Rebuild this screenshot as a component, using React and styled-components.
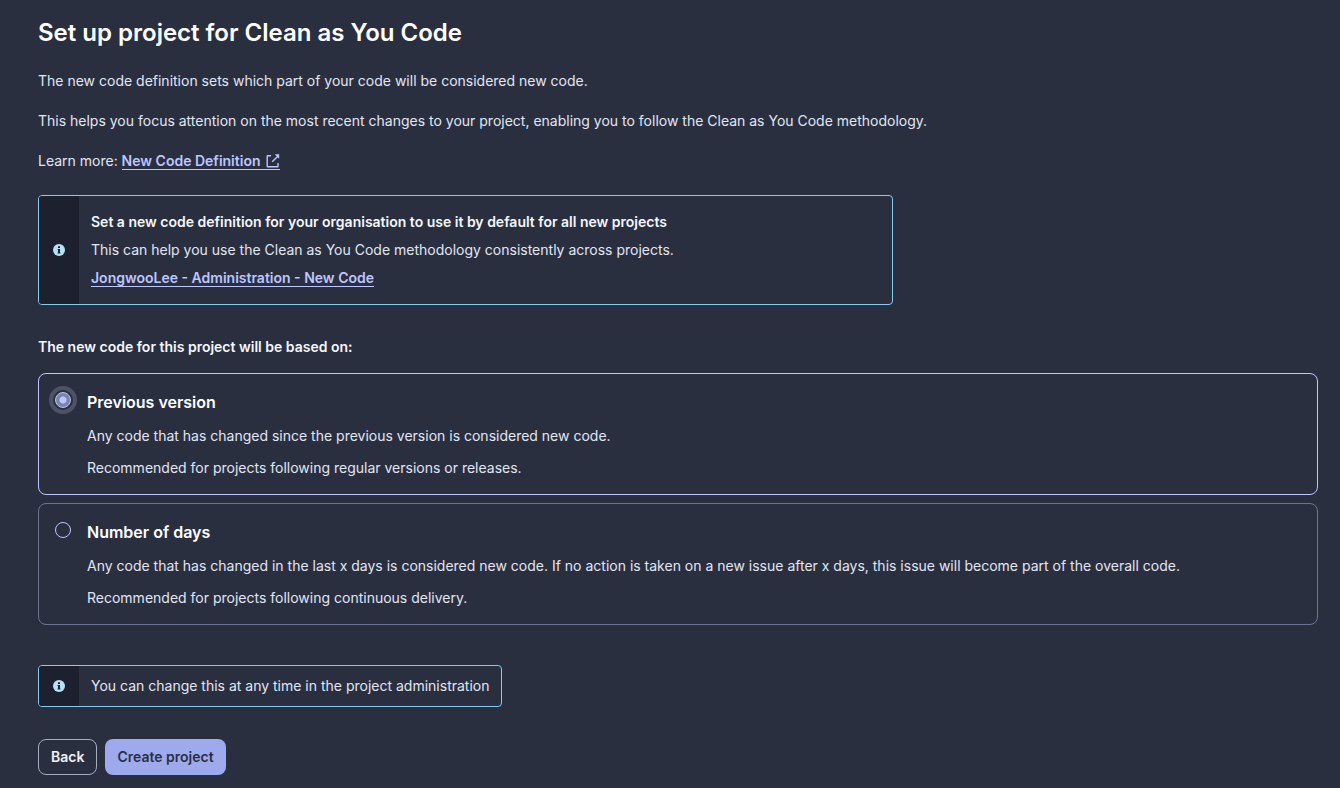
import React, { useState } from 'react';
import styled, { createGlobalStyle, css } from 'styled-components';

const GlobalStyle = createGlobalStyle`
  *, *::before, *::after { box-sizing: border-box; }
  body {
    margin: 0;
    background: #2a2f40;
    color: #e1e6f3;
    font: 400 14px/20px Inter, "Liberation Sans", sans-serif;
  }
  h1, h2, p { margin: 0; }
`;

const Page = styled.main`
  padding: 17px 22px 13px 38px;
`;

const Title = styled.h1`
  color: #fff;
  font-size: 24px;
  line-height: 32px;
  font-weight: 600;
`;

const Intro = styled.div`
  display: flex;
  flex-direction: column;
  gap: 20px;
  margin: 22px 0 24px;
`;

const Link = styled.a`
  color: #bdc6ff;
  font-weight: 600;
  text-decoration: none;
  border-bottom: 1px solid #bdc6ff;

  svg {
    margin-left: 6px;
    vertical-align: -2px;
  }
`;

const Banner = styled.aside`
  display: flex;
  width: ${(p) => (p.$wide ? 'auto' : 'fit-content')};
  max-width: 855px;
  border: 1px solid #85cdec;
  border-radius: 4px;
  overflow: hidden;
`;

const BannerIcon = styled.div`
  display: flex;
  flex: none;
  align-items: center;
  justify-content: center;
  width: 40px;
  background: #1d212f;
`;

const BannerBody = styled.div`
  display: flex;
  flex-direction: column;
  align-items: flex-start;
  gap: 8px;
  padding: ${(p) => (p.$roomy ? '16px 12px' : '10px 12px')};
`;

const Strong = styled.strong`
  color: #f5f7fc;
  font-weight: 600;
`;

const Choices = styled.fieldset`
  display: flex;
  flex-direction: column;
  gap: 8px;
  min-width: 0;
  margin: 32px 0 40px;
  padding: 0;
  border: 0;
`;

const Legend = styled.legend`
  margin-bottom: 16px;
  padding: 0;
  color: #f5f7fc;
  font-weight: 600;
`;

const Card = styled.label`
  display: flex;
  align-items: flex-start;
  gap: 16px;
  padding: 16px;
  border: 1px solid ${(p) => (p.$selected ? '#bdc6ff' : '#6a7590')};
  border-radius: 8px;
  cursor: pointer;
`;

const Radio = styled.input`
  appearance: none;
  flex: none;
  width: 16px;
  height: 16px;
  margin: 2px 0 0;
  border: 1px solid #bdc6ff;
  border-radius: 50%;
  ${(p) =>
    p.checked &&
    css`
      background: radial-gradient(circle, #bdc6ff 0 3px, #7d84a8 4px);
      outline: 4px solid #4d5267;
      outline-offset: 2px;
    `}
`;

const CardText = styled.div`
  display: flex;
  flex-direction: column;
  gap: 12px;
`;

const CardTitle = styled.h2`
  color: #fff;
  font-size: 16px;
  line-height: 24px;
  font-weight: 600;
`;

const Actions = styled.div`
  display: flex;
  gap: 8px;
  margin-top: 32px;
`;

const Button = styled.button`
  height: 36px;
  padding: 0 12px;
  border: ${(p) => (p.$primary ? '0' : '1px solid #a6adc2')};
  border-radius: 8px;
  background: ${(p) => (p.$primary ? '#9fa9ed' : 'transparent')};
  color: ${(p) => (p.$primary ? '#2a2f40' : '#eff2f9')};
  font: inherit;
  font-weight: 600;
  cursor: pointer;
`;

const InfoIcon = () => (
  <svg width="12" height="12" viewBox="0 0 12 12" aria-hidden="true">
    <circle cx="6" cy="6" r="6" fill="#b9e1f5" />
    <path d="M5 2.2h2v1.7H5zM4.6 5H7v3.4h.4v1.1H4.6V8.4H5V6.1h-.4z" fill="#1d212f" />
  </svg>
);

const ExternalIcon = () => (
  <svg width="14" height="14" viewBox="0 0 14 14" fill="none" stroke="currentColor" strokeWidth="1.4" aria-hidden="true">
    <path d="M5 1.7H1.8a.6.6 0 0 0-.6.6v9.9a.6.6 0 0 0 .6.6h9.6a.6.6 0 0 0 .6-.6V9M6.2 7.8l5.6-5.6" />
    <path d="M8.8.2h4.4v4.6z" fill="currentColor" stroke="none" />
  </svg>
);

const options = [
  {
    id: 'previous',
    title: 'Previous version',
    lines: [
      'Any code that has changed since the previous version is considered new code.',
      'Recommended for projects following regular versions or releases.',
    ],
  },
  {
    id: 'days',
    title: 'Number of days',
    lines: [
      'Any code that has changed in the last x days is considered new code. If no action is taken on a new issue after x days, this issue will become part of the overall code.',
      'Recommended for projects following continuous delivery.',
    ],
  },
];

export default function App() {
  const [selected, setSelected] = useState('previous');

  return (
    <>
      <GlobalStyle />
      <Page>
        <Title>Set up project for Clean as You Code</Title>
        <Intro>
          <p>The new code definition sets which part of your code will be considered new code.</p>
          <p>
            This helps you focus attention on the most recent changes to your project, enabling you to follow the
            Clean as You Code methodology.
          </p>
          <p>
            Learn more:{' '}
            <Link href="#new-code-definition">
              New Code Definition
              <ExternalIcon />
            </Link>
          </p>
        </Intro>

        <Banner $wide>
          <BannerIcon>
            <InfoIcon />
          </BannerIcon>
          <BannerBody $roomy>
            <Strong>Set a new code definition for your organisation to use it by default for all new projects</Strong>
            <p>This can help you use the Clean as You Code methodology consistently across projects.</p>
            <p>
              <Link href="#administration">JongwooLee - Administration - New Code</Link>
            </p>
          </BannerBody>
        </Banner>

        <Choices>
          <Legend>The new code for this project will be based on:</Legend>
          {options.map((option) => (
            <Card key={option.id} $selected={selected === option.id}>
              <Radio
                type="radio"
                name="new-code"
                value={option.id}
                checked={selected === option.id}
                onChange={() => setSelected(option.id)}
              />
              <CardText>
                <CardTitle>{option.title}</CardTitle>
                {option.lines.map((line) => (
                  <p key={line}>{line}</p>
                ))}
              </CardText>
            </Card>
          ))}
        </Choices>

        <Banner>
          <BannerIcon>
            <InfoIcon />
          </BannerIcon>
          <BannerBody>
            <p>You can change this at any time in the project administration</p>
          </BannerBody>
        </Banner>

        <Actions>
          <Button type="button">Back</Button>
          <Button type="button" $primary>
            Create project
          </Button>
        </Actions>
      </Page>
    </>
  );
}
